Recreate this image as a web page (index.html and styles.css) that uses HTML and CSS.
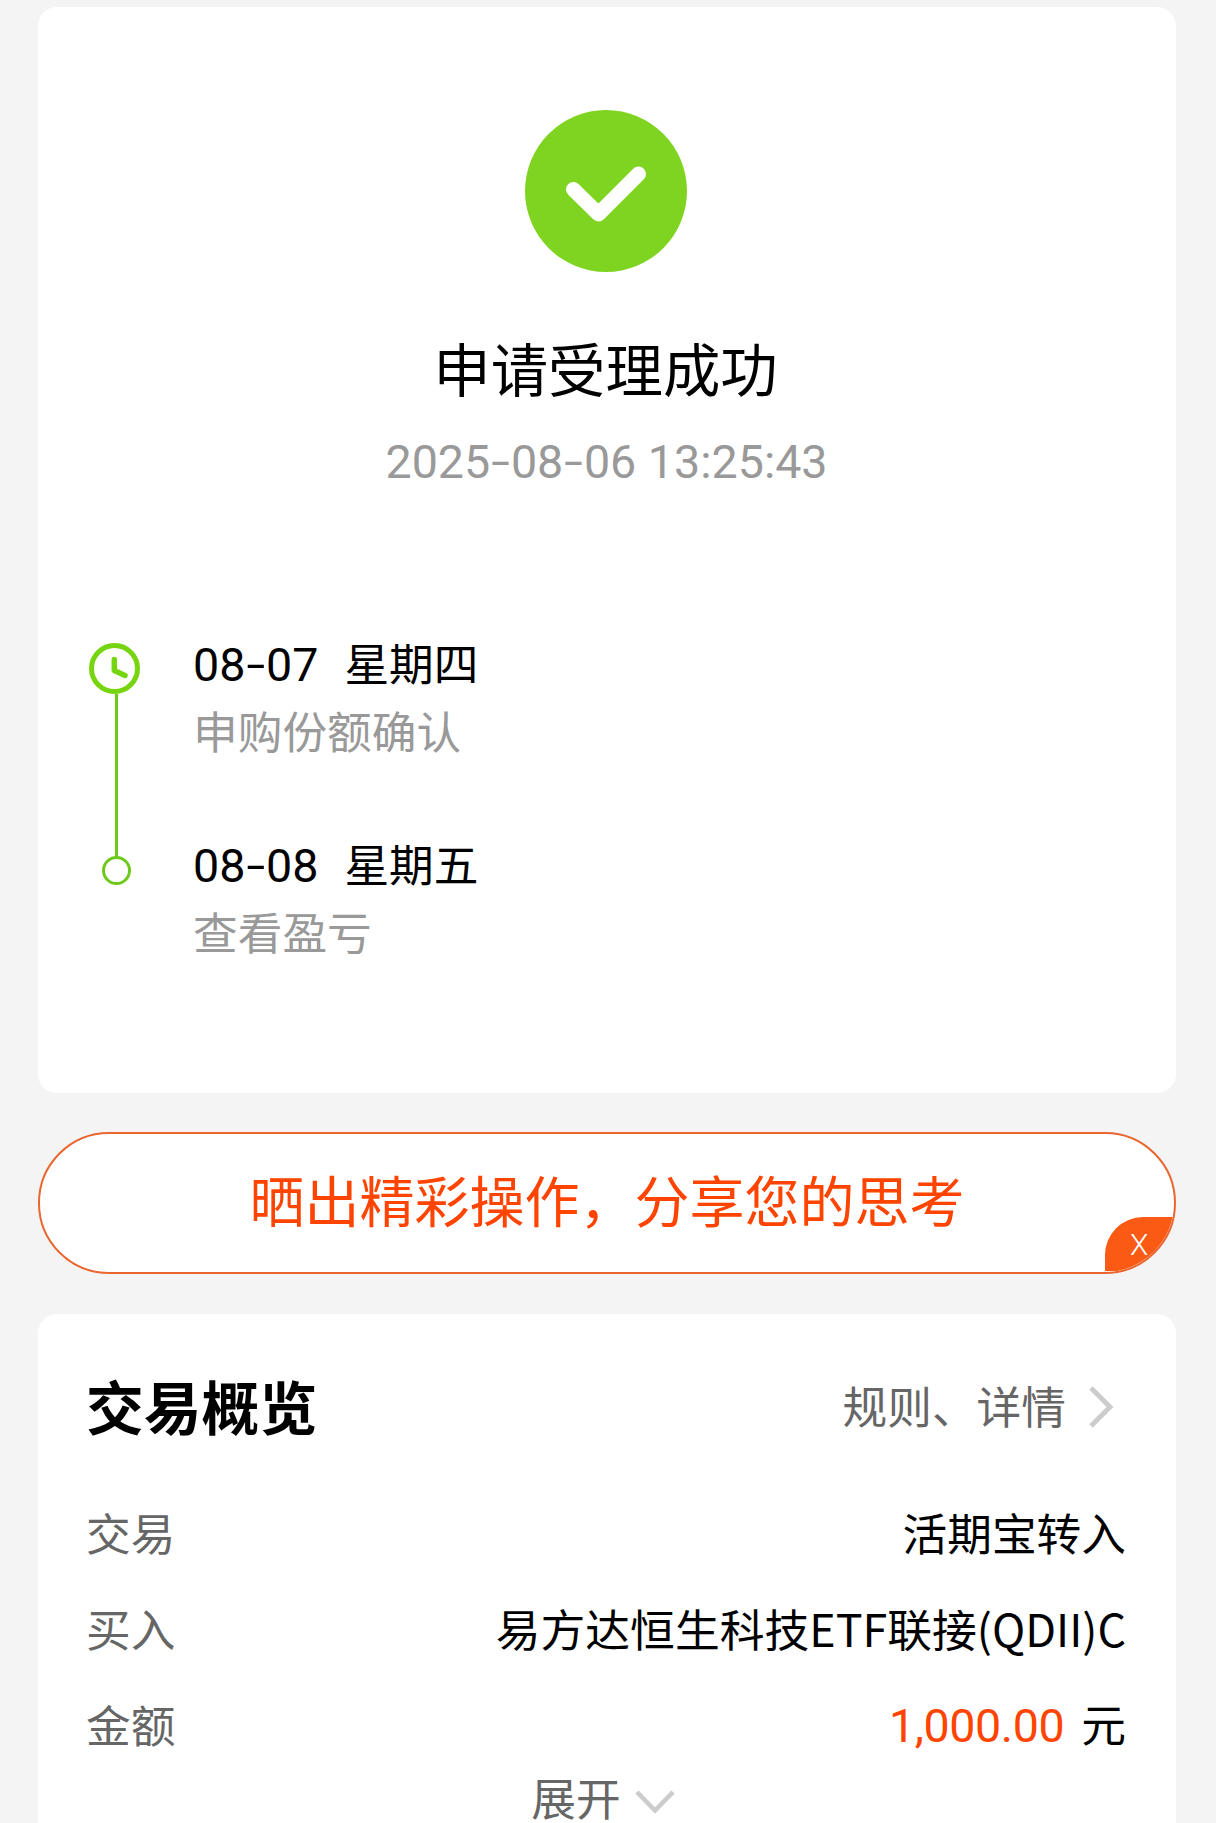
FILE: index.html
```
<!DOCTYPE html>
<html lang="zh-CN">
<head>
<meta charset="utf-8">
<meta name="viewport" content="width=device-width, initial-scale=1.0">
<title>申请受理成功</title>
<link rel="stylesheet" href="styles.css">
</head>
<body>
	<div class="card result">
		<svg class="result-icon" viewBox="0 0 162 162">
			<circle cx="81" cy="81" r="81" fill="#7fd421"/>
			<path d="M48.5 79.5L73.5 104L113.5 64" fill="none" stroke="#fff" stroke-width="15" stroke-linecap="round" stroke-linejoin="round"/>
		</svg>
		<h1>申请受理成功</h1>
		<div class="time">2025<span class="dash">-</span>08<span class="dash">-</span>06 13:25:43</div>
		<div class="progress">
			<div class="rail">
				<svg class="clock" viewBox="0 0 51 51">
					<circle cx="25.5" cy="25.5" r="23" fill="none" stroke="#76d50e" stroke-width="5"/>
					<path d="M25.3 16.5V27.5L36 32.5" fill="none" stroke="#76d50e" stroke-width="5.5" stroke-linecap="round" stroke-linejoin="round"/>
				</svg>
				<div class="line"></div>
				<div class="dot"></div>
			</div>
			<div class="steps">
				<div class="step">
					<div class="day"><span class="date">08<span class="dash">-</span>07</span><span class="week">星期四</span></div>
					<div class="note">申购份额确认</div>
				</div>
				<div class="step">
					<div class="day"><span class="date">08<span class="dash">-</span>08</span><span class="week">星期五</span></div>
					<div class="note">查看盈亏</div>
				</div>
			</div>
		</div>
	</div>

	<div class="share">
		<span class="share-text">晒出精彩操作，分享您的思考</span>
		<span class="close">X</span>
	</div>

	<div class="card overview">
		<div class="head">
			<h2>交易概览</h2>
			<div class="more">
				<span>规则、详情</span>
				<svg class="arrow" viewBox="0 0 26 44"><path d="M3 3L22 22L3 41" fill="none" stroke="#ccc" stroke-width="4.8"/></svg>
			</div>
		</div>
		<div class="row">
			<span class="label">交易</span>
			<span class="value">活期宝转入</span>
		</div>
		<div class="row">
			<span class="label">买入</span>
			<span class="value fund">易方达恒生科技ETF联接(QDII)C</span>
		</div>
		<div class="row">
			<span class="label">金额</span>
			<span class="value amount"><span class="money">1,000.00</span>元</span>
		</div>
		<div class="expand">
			<span>展开</span>
			<svg class="arrow-down" viewBox="0 0 40 24"><path d="M2 2L20 20.5L38 2" fill="none" stroke="#ccc" stroke-width="4.6"/></svg>
		</div>
	</div>
</body>
</html>
```
FILE: styles.css
```
* {
	box-sizing: border-box;
}
body {
	margin: 0;
	padding: 7px 40px 0 38px;
	height: 1823px;
	overflow: hidden;
	background-color: #f4f4f4;
	font-family: Roboto, "Noto Sans CJK SC", sans-serif;
	font-size: 44.7px;
	color: #000;
}
h1, h2 {
	margin: 0;
}
.card {
	background-color: #fff;
	border-radius: 19px;
}
.dash {
	margin: 0 -1.7px;
	font-family: Inter, sans-serif;
	font-size: 1.14em;
	font-weight: 300;
	line-height: 0;
	vertical-align: -2px;
}

/* result */
.result {
	height: 1086px;
	padding-top: 103px;
}
.result-icon {
	display: block;
	width: 162px;
	height: 162px;
	margin: 0 auto 67px 487px;
}
.result h1 {
	padding-right: 3px;
	font-size: 57.4px;
	font-weight: 400;
	line-height: 68px;
	text-align: center;
}
.time {
	margin-top: 27px;
	padding-right: 1px;
	font-size: 46.6px;
	line-height: 56px;
	text-align: center;
	color: #999;
}

/* progress */
.progress {
	display: flex;
	margin-top: 141px;
	padding-left: 51px;
}
.rail {
	display: flex;
	flex-direction: column;
	align-items: center;
	width: 54px;
	padding-top: 12px;
}
.clock {
	width: 51px;
	height: 51px;
	margin-right: 3px;
}
.line {
	width: 3px;
	height: 162px;
	background-color: #6fc91a;
}
.dot {
	width: 29px;
	height: 29px;
	border: 3px solid #6fc91a;
	border-radius: 50%;
}
.steps {
	padding-left: 50px;
}
.step {
	height: 201px;
	line-height: 69px;
}
.day {
	display: flex;
	gap: 26px;
	height: 69px;
}
.date {
	font-size: 46.6px;
}
.week {
	padding-top: 1px;
}
.note {
	color: #999;
}

/* share bar */
.share {
	position: relative;
	display: flex;
	justify-content: center;
	height: 142px;
	margin: 39px 0 40px;
	border: 2px solid #e9662f;
	border-radius: 71px;
	background-color: #fff;
	overflow: hidden;
}
.share-text {
	font-size: 55px;
	line-height: 138px;
	color: #ff4400;
}
.close {
	position: absolute;
	right: 0;
	bottom: 1px;
	width: 69px;
	height: 54px;
	padding-left: 25px;
	border-top-left-radius: 38px;
	background-color: #fb5a15;
	font-size: 30px;
	font-weight: 300;
	line-height: 55px;
	color: #fff;
}

/* overview */
.overview {
	height: 509px;
	padding: 60px 50px 0 48px;
	border-radius: 19px 19px 0 0;
}
.head {
	display: flex;
	justify-content: space-between;
	height: 114px;
	line-height: 72px;
}
.head h2 {
	font-size: 57.8px;
	font-weight: 700;
}
.more {
	display: flex;
	align-items: flex-start;
	line-height: 70px;
	color: #666;
}
.arrow {
	width: 26px;
	height: 44px;
	margin: 11px 12px 0 22px;
}
.row {
	display: flex;
	justify-content: space-between;
	line-height: 96px;
	height: 96px;
}
.label {
	color: #666;
}
/* the CJK face sits lower in its line box */
.fund {
	font-family: "Noto Sans CJK SC", sans-serif;
	font-size: 44.8px;
	line-height: 88px;
}
.amount {
	line-height: 93px;
}
.money {
	margin-right: 17px;
	font-size: 46.6px;
	letter-spacing: -0.4px;
	color: #ff4400;
}
.expand {
	display: flex;
	justify-content: center;
	align-items: center;
	gap: 14px;
	padding-right: 6px;
	line-height: 50px;
	color: #666;
}
.arrow-down {
	width: 40px;
	height: 24px;
	margin-top: 2px;
}
```
